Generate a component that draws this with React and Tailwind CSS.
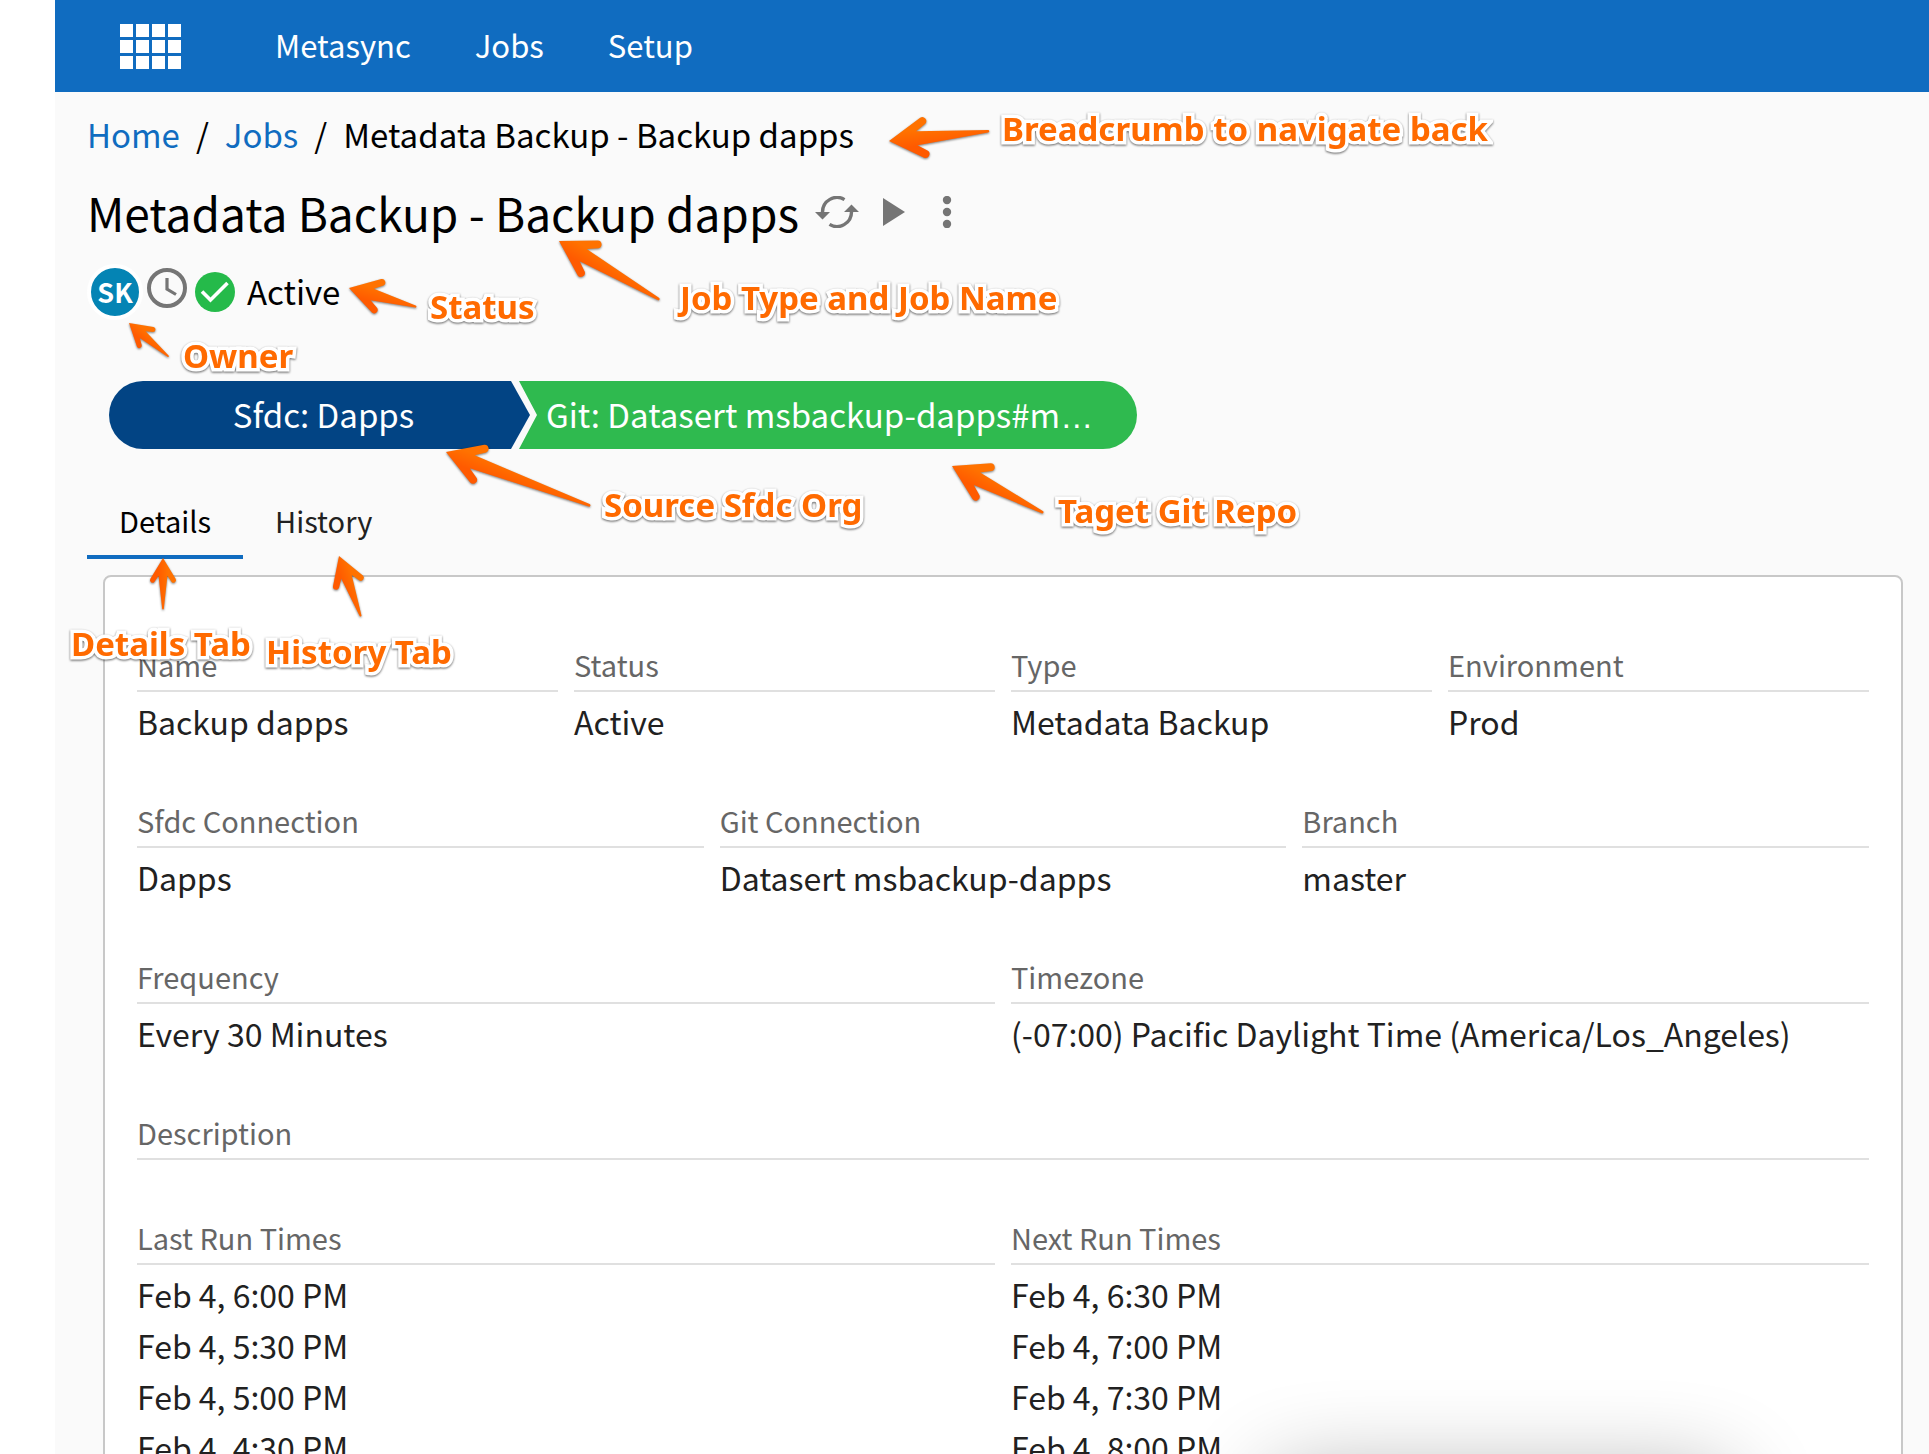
import React, { useState } from 'react';

const navLinks = ['Metasync', 'Jobs', 'Setup'];

const detailRows = [
  {
    grid: 'grid-cols-4',
    fields: [
      { label: 'Name', values: ['Backup dapps'] },
      { label: 'Status', values: ['Active'] },
      { label: 'Type', values: ['Metadata Backup'] },
      { label: 'Environment', values: ['Prod'] },
    ],
  },
  {
    grid: 'grid-cols-3',
    fields: [
      { label: 'Sfdc Connection', values: ['Dapps'] },
      { label: 'Git Connection', values: ['Datasert msbackup-dapps'] },
      { label: 'Branch', values: ['master'] },
    ],
  },
  {
    grid: 'grid-cols-2',
    fields: [
      { label: 'Frequency', values: ['Every 30 Minutes'] },
      {
        label: 'Timezone',
        values: ['(-07:00) Pacific Daylight Time (America/Los_Angeles)'],
      },
    ],
  },
  {
    grid: 'grid-cols-1',
    fields: [{ label: 'Description', values: [] }],
  },
  {
    grid: 'grid-cols-2',
    fields: [
      {
        label: 'Last Run Times',
        values: ['Feb 4, 6:00 PM', 'Feb 4, 5:30 PM', 'Feb 4, 5:00 PM', 'Feb 4, 4:30 PM'],
      },
      {
        label: 'Next Run Times',
        values: ['Feb 4, 6:30 PM', 'Feb 4, 7:00 PM', 'Feb 4, 7:30 PM', 'Feb 4, 8:00 PM'],
      },
    ],
  },
];

const notes = [
  { text: 'Breadcrumb to navigate back', place: 'left-[1002px] top-[109px]' },
  { text: 'Job Type and Job Name', place: 'left-[680px] top-[278px]' },
  { text: 'Status', place: 'left-[430px] top-[287px]' },
  { text: 'Owner', place: 'left-[183px] top-[336px]' },
  { text: 'Source Sfdc Org', place: 'left-[604px] top-[485px]' },
  { text: 'Taget Git Repo', place: 'left-[1058px] top-[491px]' },
  { text: 'Details Tab', place: 'left-[71px] top-[624px]' },
  { text: 'History Tab', place: 'left-[266px] top-[632px]' },
];

// tip and tail of every arrow
const arrows = [
  { tip: [889, 141], tail: [990, 131] },
  { tip: [559, 241], tail: [660, 300] },
  { tip: [349, 288], tail: [417, 307] },
  { tip: [129, 323], tail: [169, 357] },
  { tip: [446, 452], tail: [591, 506] },
  { tip: [952, 466], tail: [1044, 513] },
  { tip: [163, 558], tail: [163, 610] },
  { tip: [339, 556], tail: [361, 617] },
];

const Arrow = ({ tip, tail }) => {
  const dx = tail[0] - tip[0];
  const dy = tail[1] - tip[1];
  const length = Math.hypot(dx, dy);
  const scale = Math.min(1, length / 82);
  const angle = (Math.atan2(dy, dx) * 180) / Math.PI;
  const end = length / scale - 2;

  return (
    <path
      transform={`translate(${tip[0]} ${tip[1]}) rotate(${angle}) scale(${scale})`}
      d={`M0 0 L33.3 20.1 A4 4 0 0 0 37.8 13.6 L28 7 L${end} 1.3 A1.3 1.3 0 0 0 ${end} -1.3 L28 -7 L37.8 -13.6 A4 4 0 0 0 33.3 -20.1 Z`}
      fill="url(#arrowFill)"
    />
  );
};

const Annotations = () => (
  <div className="absolute inset-0 pointer-events-none">
    <svg className="absolute left-0 top-0 w-[1929px] h-[700px] drop-shadow-[0_1px_1px_rgba(0,0,0,0.5)]" viewBox="0 0 1929 700">
      <defs>
        <linearGradient id="arrowFill" x1="0" y1="0" x2="0" y2="1">
          <stop offset="0.3" stopColor="#ff7200" />
          <stop offset="0.7" stopColor="#ff5a00" />
        </linearGradient>
      </defs>
      {arrows.map((arrow) => (
        <Arrow key={arrow.tip.join()} {...arrow} />
      ))}
    </svg>
    {notes.map(({ text, place }) => (
      <span
        key={text}
        className={`absolute whitespace-nowrap font-['Noto_Sans',sans-serif] font-bold text-[33px] leading-10 text-[#ff6a00] [-webkit-text-stroke:7px_white] [paint-order:stroke_fill] drop-shadow-[0_1px_1px_rgba(0,0,0,0.6)] ${place}`}
      >
        {text}
      </span>
    ))}
  </div>
);

const Header = () => (
  <header className="flex items-center h-[92px] pl-[65px] bg-[#106cc0] text-white">
    <button type="button" aria-label="Apps" className="mr-[94px]">
      <svg className="w-[61px] h-[45px]" viewBox="0 0 61 45" fill="currentColor">
        {[0, 16, 32, 48].map((x) =>
          [0, 16, 32].map((y) => <rect key={`${x}-${y}`} x={x} y={y} width="13" height="13" />)
        )}
      </svg>
    </button>
    <nav className="flex gap-16 pb-[2px] text-[31px] leading-10">
      {navLinks.map((link) => (
        <a key={link} href="#">
          {link}
        </a>
      ))}
    </nav>
  </header>
);

const Breadcrumb = () => (
  <nav aria-label="Breadcrumb" className="flex gap-4 text-[33px] leading-12 text-black">
    <a href="#" className="text-[#106cc0]">
      Home
    </a>
    <span>/</span>
    <a href="#" className="text-[#106cc0]">
      Jobs
    </a>
    <span>/</span>
    <span>Metadata Backup - Backup dapps</span>
  </nav>
);

const TitleBar = () => (
  <div className="flex items-center mt-4 text-[#757575]">
    <h1 className="text-[46px] leading-[76px] text-black">Metadata Backup - Backup dapps</h1>
    <button type="button" aria-label="Refresh" className="ml-4">
      <svg className="w-11 h-8" viewBox="0 0 44 32">
        <g fill="none" stroke="currentColor" strokeWidth="3.4">
          <path d="M7.5 16 A14.5 14.5 0 0 1 29.5 3.6" />
          <path d="M36.5 16 A14.5 14.5 0 0 1 14.5 28.4" />
        </g>
        <path d="M0 16 H15 L7.5 23.5 Z M44 16 H29 L36.5 8.5 Z" fill="currentColor" />
      </svg>
    </button>
    <button type="button" aria-label="Run" className="ml-6">
      <svg className="w-[22px] h-7" viewBox="0 0 22 28" fill="currentColor">
        <path d="M0 0 L22 14 L0 28 Z" />
      </svg>
    </button>
    <button type="button" aria-label="More" className="ml-9">
      <svg className="w-3 h-8" viewBox="0 0 12 32" fill="currentColor">
        <circle cx="6" cy="4" r="4.2" />
        <circle cx="6" cy="16" r="4.2" />
        <circle cx="6" cy="28" r="4.2" />
      </svg>
    </button>
  </div>
);

const StatusLine = () => (
  <div className="flex items-center mt-[14px]">
    <span className="flex items-center justify-center w-14 h-14 rounded-full border-4 border-white bg-[#0484b4] text-white text-[27px] font-bold">
      SK
    </span>
    <svg className="w-10 h-10 ml-1 mb-2" viewBox="0 0 40 40" fill="none" stroke="#757575" strokeWidth="4">
      <circle cx="20" cy="20" r="18" />
      <path d="M20 10 V21 L29 26.5" strokeWidth="3.2" />
    </svg>
    <svg className="w-10 h-10 ml-2" viewBox="0 0 40 40" fill="none">
      <circle cx="20" cy="20" r="20" fill="#25ba4a" />
      <path d="M7 19.5 L15.5 28 L32.5 11" stroke="white" strokeWidth="3.6" />
    </svg>
    <span className="ml-3 pb-[2px] text-[33px] leading-12 text-black">Active</span>
  </div>
);

const Flow = () => (
  <div className="flex mt-[61px] ml-[22px] text-[33px] leading-[66px] text-white">
    <div className="w-[421px] pl-2 pb-[2px] rounded-l-full bg-[#024484] text-center [clip-path:polygon(0_0,402px_0,100%_50%,402px_100%,0_100%)]">
      Sfdc: Dapps
    </div>
    <div className="w-[618px] -ml-[11px] pl-[27px] pr-6 pb-[2px] whitespace-nowrap overflow-hidden rounded-r-full bg-[#2fba4f] [clip-path:polygon(0_0,100%_0,100%_100%,0_100%,18px_50%)]">
      Git: Datasert msbackup-dapps#m<span className="font-['Liberation_Sans',sans-serif] leading-none">…</span>
    </div>
  </div>
);

const Tabs = ({ active, onChange }) => (
  <div role="tablist" className="flex mt-8 text-[29px]">
    {['Details', 'History'].map((tab) => (
      <button
        key={tab}
        type="button"
        role="tab"
        aria-selected={active === tab}
        onClick={() => onChange(tab)}
        className={`px-8 pt-4 pb-3 leading-[46px] border-b-4 ${
          active === tab ? 'border-[#106cc0] text-black' : 'border-transparent text-[#212121]'
        }`}
      >
        {tab}
      </button>
    ))}
  </div>
);

const Field = ({ label, values }) => (
  <div>
    <dt className="pb-[6px] border-b-2 border-[#e0e0e0] text-[29px] leading-10 text-[#666666]">
      {label}
    </dt>
    <dd className="pt-1 text-[32px] leading-[51px] text-[#212121]">
      {values.map((value) => (
        <div key={value}>{value}</div>
      ))}
    </dd>
  </div>
);

const App = () => {
  const [tab, setTab] = useState('Details');

  return (
    <div className="relative h-screen overflow-hidden pl-[55px] bg-white font-['Noto_Sans_CJK_SC',sans-serif]">
      <div className="bg-[#fafafa]">
        <Header />
        <main className="pl-8 pr-[26px] pt-[18px]">
          <Breadcrumb />
          <TitleBar />
          <StatusLine />
          <Flow />
          <Tabs active={tab} onChange={setTab} />
          <section className="mt-4 ml-4 px-8 pt-[67px] pb-16 rounded-lg border-2 border-[#c8c8c8] bg-white">
            <div className="flex flex-col gap-[53px]">
              {detailRows.map(({ grid, fields }) => (
                <dl key={fields[0].label} className={`grid gap-4 ${grid}`}>
                  {fields.map((field) => (
                    <Field key={field.label} {...field} />
                  ))}
                </dl>
              ))}
            </div>
          </section>
        </main>
      </div>
      <div className="absolute top-full left-[1270px] w-[460px] h-40 mt-5 rounded-3xl shadow-[0_0_90px_rgba(0,0,0,0.32)]" />
      <Annotations />
    </div>
  );
};

export default App;
